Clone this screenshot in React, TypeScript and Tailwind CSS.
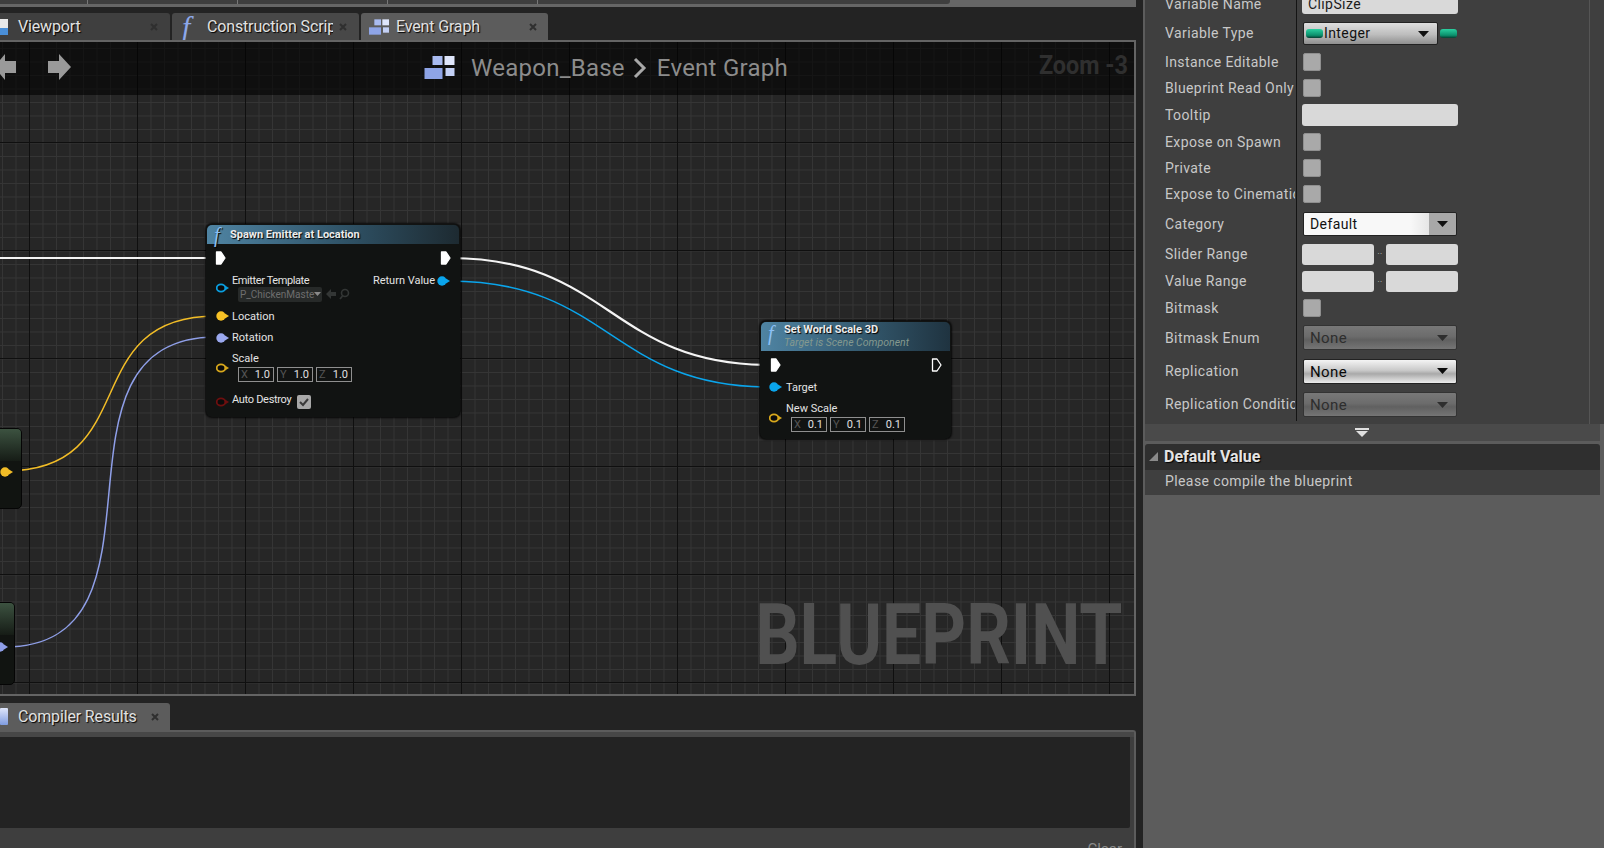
import React from "react";

const Pin = ({ color, hollow = false }: { color: string; hollow?: boolean }) => (
  <svg width="14" height="12" viewBox="0 0 14 12" className="shrink-0">
    <polygon points="9,3.5 13,6 9,8.5" fill={color} />
    <ellipse cx="5" cy="6" rx={hollow ? 4.3 : 4.7} ry={hollow ? 3.6 : 4.7} fill={hollow ? "#0b0b0b" : color} stroke={hollow ? color : "none"} strokeWidth={hollow ? 1.8 : 0} />
  </svg>
);

const Exec = ({ hollow = false }: { hollow?: boolean }) => (
  <svg width="11" height="14" viewBox="0 0 11 14" className="shrink-0">
    <path d="M1.5 1 H6 L10 7 L6 13 H1.5 Z" fill={hollow ? "none" : "#fff"} stroke="#fff" strokeWidth="1.3" strokeLinejoin="round" />
  </svg>
);

const GraphIcon = ({ w, h }: { w: number; h: number }) => (
  <svg width={w} height={h} viewBox="0 0 30 23" className="shrink-0">
    <rect x="8" y="0" width="10" height="9" fill="#a9bbf0" />
    <rect x="20" y="0" width="10" height="9" fill="#dfe6fb" />
    <rect x="0" y="12" width="18" height="11" fill="#8ea4e6" />
    <rect x="21" y="12" width="9" height="8" fill="#c3d0f5" />
  </svg>
);

const FnIcon = ({ cls }: { cls: string }) => (
  <span className={`[font-family:'Liberation_Serif',serif] italic ${cls}`}>f</span>
);

const CloseX = () => (
  <svg width="8" height="8" viewBox="0 0 8 8" className="shrink-0">
    <path d="M1 1 L7 7 M7 1 L1 7" stroke="#2f2f2f" strokeWidth="2" />
  </svg>
);

const Axis = ({ a, v }: { a: string; v: string }) => (
  <div className="flex h-[15px] w-[36px] items-center justify-between border border-[#8f8f8f] pl-[2px] pr-[3px] text-[11px] leading-none">
    <span className="text-[#555555]">{a}</span>
    <span className="text-[#e0e0e0]">{v}</span>
  </div>
);

const Triple = ({ v }: { v: string }) => (
  <div className="ml-[6px] mt-[2px] flex gap-[3px]">
    <Axis a="X" v={v} />
    <Axis a="Y" v={v} />
    <Axis a="Z" v={v} />
  </div>
);

const Caret = ({ cls }: { cls: string }) => (
  <svg width="11" height="6" viewBox="0 0 11 6" className={`shrink-0 ${cls}`}>
    <polygon points="0,0 11,0 5.5,6" fill="currentColor" />
  </svg>
);

const Check = () => <div className="h-[18px] w-[18px] rounded-[2px] border border-[#8f8f8f] bg-[#a9a9a9]" />;

const Field = ({ children, cls }: { children?: React.ReactNode; cls: string }) => (
  <div className={`flex items-center rounded-[3px] bg-[#d9d9d9] pl-[6px] text-[14px] tracking-[0.4px] text-[#1c1c1c] ${cls}`}>{children}</div>
);

const Range = () => (
  <div className="-ml-px flex items-center">
    <Field cls="h-[21px] w-[72px]" />
    <div className="w-[12px] text-center text-[8px] leading-none text-[#cccccc]">··</div>
    <Field cls="h-[21px] w-[72px]" />
  </div>
);

const Combo = ({ on }: { on: boolean }) => (
  <div
    className={
      on
        ? "flex h-[25px] w-[154px] items-center justify-between rounded-[2px] border border-[#222222] bg-[linear-gradient(#f4f4f4,#c9c9c9_45%,#a9a9a9_60%,#ececec)] pl-[6px] pr-[8px] text-[15px] text-[#0a0a0a]"
        : "flex h-[25px] w-[154px] items-center justify-between rounded-[2px] border border-[#333333] bg-[linear-gradient(#787878,#6c6c6c_45%,#606060_60%,#757575)] pl-[6px] pr-[8px] text-[15px] text-[#2e2e2e]"
    }
  >
    <span className="mt-[2px]">None</span>
    <Caret cls={on ? "text-[#0a0a0a]" : "text-[#2e2e2e]"} />
  </div>
);

const rows: { label: string; h: string; lc?: string; c: React.ReactNode }[] = [
  { label: "Variable Name", h: "h-[28px]", c: <Field cls="-ml-px mt-[2px] h-[22px] w-[156px] self-start pt-[2px]">ClipSize</Field> },
  {
    label: "Variable Type",
    h: "h-[31px]",
    c: (
      <div className="flex items-center gap-[2px]">
        <div className="flex h-[23px] w-[135px] items-center rounded-[2px] border border-[#222222] bg-[linear-gradient(#dedede,#bdbdbd_55%,#8f8f8f)] pl-[2px] pr-[8px] text-[14px] tracking-[0.4px] text-[#111111]">
          <div className="h-[9px] w-[17px] rounded-[3px] bg-[linear-gradient(#2ad0a0,#0b8f6c_70%,#063d30)]" />
          <span className="ml-px flex-1">Integer</span>
          <Caret cls="text-[#111111]" />
        </div>
        <div className="h-[9px] w-[17px] rounded-[3px] bg-[linear-gradient(#2ad0a0,#0b8f6c_70%,#063d30)]" />
      </div>
    ),
  },
  { label: "Instance Editable", h: "h-[26px]", c: <Check /> },
  { label: "Blueprint Read Only", h: "h-[26px]", c: <Check /> },
  { label: "Tooltip", h: "h-[28px]", c: <Field cls="-ml-px h-[22px] w-[156px]" /> },
  { label: "Expose on Spawn", h: "h-[26px]", c: <Check /> },
  { label: "Private", h: "h-[26px]", c: <Check /> },
  { label: "Expose to Cinematic", h: "h-[26px]", c: <Check /> },
  {
    label: "Category",
    h: "h-[33px]",
    lc: "pt-[2px]",
    c: (
      <div className="flex h-[24px] w-[154px] items-center overflow-hidden rounded-[2px] border border-[#222222] text-[14px] tracking-[0.4px] text-[#111111]">
        <div className="flex h-full flex-1 items-center bg-[linear-gradient(to_right,#f8f8f8,#f8f8f8_85%,#e6e6e6)] pl-[6px] pt-[2px]">Default</div>
        <div className="flex h-full w-[27px] items-center justify-center bg-[#a8a8a8]"><Caret cls="text-[#111111]" /></div>
      </div>
    ),
  },
  { label: "Slider Range", h: "h-[28px]", c: <Range /> },
  { label: "Value Range", h: "h-[27px]", c: <Range /> },
  { label: "Bitmask", h: "h-[26px]", c: <Check /> },
  { label: "Bitmask Enum", h: "h-[33px]", lc: "pt-[2px]", c: <Combo on={false} /> },
  { label: "Replication", h: "h-[34px]", lc: "pt-[1px]", c: <Combo on /> },
  { label: "Replication Condition", h: "h-[33px]", c: <Combo on={false} /> },
];

const Tab = ({ cls, icon, label, textCls }: { cls: string; icon: React.ReactNode; label: string; textCls: string }) => (
  <div className={`flex h-[27px] items-center rounded-t-[3px] ${cls}`}>
    {icon}
    <span className={`whitespace-nowrap text-[16px] leading-none tracking-[-0.15px] text-[#e2e2e2] [text-shadow:1px_1px_1px_#000] ${textCls}`}>{label}</span>
    <CloseX />
  </div>
);

export default function App() {
  return (
    <div className="flex h-[848px] w-[1604px] overflow-hidden bg-[#232323] [font-family:Roboto,sans-serif]">
      {/* left column */}
      <div className="flex h-full w-[1136px] shrink-0 flex-col">
        <div className="flex h-[7px] shrink-0 flex-col bg-[#666666]">
          <div className="flex h-[4px] w-[950px] justify-between rounded-br-[3px] bg-[#3e3e3e] pl-[87px] pr-[412px]">
            <div className="w-px bg-[#777777]" />
            <div className="w-px bg-[#777777]" />
            <div className="w-px bg-[#777777]" />
            <div className="w-px bg-[#777777]" />
          </div>
        </div>
        {/* tabs */}
        <div className="mt-[6px] flex h-[27px] shrink-0 gap-[2px]">
          <Tab
            cls="ml-[-8px] w-[178px] bg-[#3f3f3f] pl-[8px]"
            textCls="ml-[10px] w-[132px]"
            label="Viewport"
            icon={
              <div className="flex h-[16px] w-[8px] shrink-0 flex-col">
                <div className="h-[9px] bg-[#e8e8e8]" />
                <div className="h-[7px] bg-[#4a8fd8]" />
              </div>
            }
          />
          <Tab
            cls="w-[187px] bg-[#484848] pl-[10px]"
            textCls="ml-[15px] w-[126px] mr-[6px] overflow-hidden"
            label="Construction Script"
            icon={<FnIcon cls="w-[10px] text-[30px] leading-none text-[#8ea8ea]" />}
          />
          <Tab
            cls="w-[187px] bg-[#5c5c5c] pl-[8px]"
            textCls="ml-[7px] w-[133px]"
            label="Event Graph"
            icon={<GraphIcon w={20} h={16} />}
          />
        </div>

        {/* graph */}
        <div className="relative h-[656px] w-full shrink-0 overflow-hidden border-y-2 border-r-2 border-[#646464] bg-[#262626] bg-[linear-gradient(to_right,#0f0f0f_1px,transparent_1px),linear-gradient(to_bottom,#0f0f0f_1px,transparent_1px),linear-gradient(to_right,#353535_1px,transparent_1px),linear-gradient(to_bottom,#353535_1px,transparent_1px)] bg-[size:108px_108px,108px_108px,13.5px_13.5px,13.5px_13.5px] bg-[position:29px_0,0_100px,2px_0,0_6px]">
          {/* title band */}
          <div className="absolute left-0 right-0 top-0 h-[53px] bg-[#000000]/60">
            <svg width="24" height="28" viewBox="0 0 24 28" className="absolute left-[-6px] top-[11px]">
              <polygon points="22,8 22,20 11,20 11,27 0,14 11,1 11,8" fill="#9a9a9a" />
            </svg>
            <svg width="24" height="28" viewBox="0 0 24 28" className="absolute left-[48px] top-[11px]">
              <polygon points="0,8 11,8 11,1 23,14 11,27 11,20 0,20" fill="#9a9a9a" />
            </svg>
            <div className="absolute left-[424px] top-[13px] flex h-[25px] items-center text-[24px] leading-none tracking-[0.25px] text-[#8c8c8c]">
              <GraphIcon w={31} h={23} />
              <span className="ml-[16px]">Weapon_Base</span>
              <svg width="14" height="22" viewBox="0 0 14 22" className="ml-[8px]">
                <path d="M2 2 L11 11 L2 20" fill="none" stroke="#a8a8a8" strokeWidth="3" />
              </svg>
              <span className="ml-[10px]">Event Graph</span>
            </div>
            <div className="absolute right-[6px] top-[8px] origin-right scale-x-[0.9] text-[26px] font-bold leading-[30px] text-[#2f2f2f]">Zoom -3</div>
          </div>

          <div className="absolute bottom-[16px] right-[12px] origin-right scale-x-[0.81] whitespace-nowrap text-[86px] font-bold leading-[86px] text-[#505050]">BLUEPRINT</div>

          {/* wires */}
          <svg className="absolute left-0 top-0" width="1136" height="652" viewBox="0 42 1136 652" fill="none">
            <path d="M0 258 H216" stroke="#f4f4f4" strokeWidth="2.2" />
            <path d="M450 258 C610 258 610 365 770 365" stroke="#f4f4f4" strokeWidth="2.2" />
            <path d="M449 281 C610 281 610 387 770 387" stroke="#0aa5ec" strokeWidth="1.5" />
            <path d="M5 471 C145 471 75 316 216 316" stroke="#f2bd27" strokeWidth="1.5" />
            <path d="M5 647 C185 647 32 337 216 337" stroke="#8f9fe8" strokeWidth="1.5" />
          </svg>

          {/* cut-off nodes on the left edge */}
          <div className="absolute left-[-40px] top-[386px] flex h-[81px] w-[62px] flex-col overflow-hidden rounded-[5px] border border-[#050505] bg-[#111411]">
            <div className="h-[32px] bg-[linear-gradient(to_bottom,#3c5240,#161c16)]" />
            <div className="absolute right-[7px] top-[37px]"><Pin color="#f2bd27" /></div>
          </div>
          <div className="absolute left-[-40px] top-[560px] flex h-[83px] w-[55px] flex-col overflow-hidden rounded-[5px] border border-[#050505] bg-[#111411]">
            <div className="h-[32px] bg-[linear-gradient(to_bottom,#3c5240,#161c16)]" />
            <div className="absolute right-[5px] top-[38px]"><Pin color="#8f9fe8" /></div>
          </div>

          {/* Spawn Emitter at Location */}
          <div className="absolute left-[206px] top-[182px] w-[254px] rounded-[6px] bg-[#111312] pb-[2px] text-[11px] leading-[13px] text-[#e4e4e4] shadow-[0_0_2px_1px_rgba(0,0,0,0.8)]">
            <div className="mx-px mt-px flex h-[19px] items-center rounded-t-[5px] bg-[linear-gradient(to_right,#4f84a3,#2f5266_55%,#1d2a31)] pl-[7px] text-[11px] font-bold text-[#ececec] [text-shadow:1px_1px_1px_#000]">
              <FnIcon cls="w-[16px] text-[20px] font-normal leading-none text-[#8cc0f5]" />
              <span>Spawn Emitter at Location</span>
            </div>
            <div className="flex h-[28px] items-center justify-between pl-[9px] pr-[9px]">
              <Exec />
              <Exec />
            </div>
            <div className="flex h-[32px] items-center justify-between pl-[10px] pr-[9px]">
              <div className="flex items-center gap-[2px]">
                <Pin color="#0a9fe0" hollow />
                <div className="-mt-px">
                  <div className="tracking-[-0.4px]">Emitter Template</div>
                  <div className="flex items-center">
                    <div className="ml-[6px] flex h-[15px] w-[84px] items-center justify-between rounded-[2px] bg-[#272a29] pl-[2px] pr-[3px] text-[10px] text-[#6e6e6e]">
                      <span>P_ChickenMaste</span>
                      <Caret cls="w-[7px] text-[#8a8a8a]" />
                    </div>
                    <svg width="26" height="12" viewBox="0 0 26 12" className="ml-[4px]">
                      <path d="M0 6 L5 1 V4 H10 V8 H5 V11 Z" fill="#333635" />
                      <circle cx="19" cy="5" r="3.5" fill="none" stroke="#333635" strokeWidth="1.6" />
                      <path d="M16.5 8 L14 11" stroke="#333635" strokeWidth="1.8" />
                    </svg>
                  </div>
                </div>
              </div>
              <div className="mb-[15px] flex items-center gap-[2px]">
                <span>Return Value</span>
                <Pin color="#0aa5ec" />
              </div>
            </div>
            <div className="flex h-[24px] items-center gap-[2px] pl-[10px]">
              <Pin color="#f8c225" />
              <span>Location</span>
            </div>
            <div className="flex h-[19px] items-center gap-[2px] pl-[10px]">
              <Pin color="#9aa8ee" />
              <span>Rotation</span>
            </div>
            <div className="flex h-[42px] items-center gap-[2px] pl-[10px]">
              <Pin color="#d8a81c" hollow />
              <div className="mb-[2px]">
                <div>Scale</div>
                <Triple v="1.0" />
              </div>
            </div>
            <div className="flex h-[26px] items-center gap-[2px] pl-[10px]">
              <Pin color="#6e0f0f" hollow />
              <span className="mb-[6px] w-[63px] whitespace-nowrap tracking-[-0.3px]">Auto Destroy</span>
              <div className="flex h-[14px] w-[14px] items-center justify-center rounded-[2px] bg-[#a8a8a8]">
                <svg width="10" height="10" viewBox="0 0 10 10">
                  <path d="M1 5 L4 8 L9 2" fill="none" stroke="#3a3a3a" strokeWidth="2" />
                </svg>
              </div>
            </div>
          </div>

          {/* Set World Scale 3D */}
          <div className="absolute left-[760px] top-[279px] w-[191px] rounded-[6px] bg-[#111312] pb-[1px] text-[11px] leading-[13px] text-[#e4e4e4] shadow-[0_0_2px_1px_rgba(0,0,0,0.8)]">
            <div className="mx-px mt-px flex h-[29px] rounded-t-[5px] bg-[linear-gradient(to_right,#4f84a3,#33586d_55%,#1f3340)] pl-[7px] pt-[1px]">
              <FnIcon cls="w-[16px] text-[20px] leading-none text-[#8cc0f5]" />
              <div>
                <div className="font-bold text-[#ececec] [text-shadow:1px_1px_1px_#000]">Set World Scale 3D</div>
                <div className="text-[10.5px] italic text-[#84998f]">Target is Scene Component</div>
              </div>
            </div>
            <div className="flex h-[28px] items-center justify-between pl-[10px] pr-[9px]">
              <Exec />
              <Exec hollow />
            </div>
            <div className="flex h-[16px] items-center gap-[3px] pl-[9px]">
              <Pin color="#0aa5ec" />
              <span>Target</span>
            </div>
            <div className="flex h-[43px] items-center gap-[3px] pl-[9px]">
              <div className="mt-[3px]"><Pin color="#d8a81c" hollow /></div>
              <div>
                <div>New Scale</div>
                <div className="-ml-px"><Triple v="0.1" /></div>
              </div>
            </div>
          </div>
        </div>

        {/* compiler results */}
        <div className="mt-[7px] flex h-[27px] shrink-0">
          <div className="ml-[-8px] flex w-[178px] items-center rounded-t-[3px] bg-[#5c5c5c] pl-[8px]">
            <div className="h-[17px] w-[8px] shrink-0 rounded-[1px] bg-[linear-gradient(#dfe6fb,#7f9ce0)]" />
            <span className="ml-[10px] w-[133px] whitespace-nowrap text-[16px] leading-none tracking-[-0.15px] text-[#e2e2e2] [text-shadow:1px_1px_1px_#000]">Compiler Results</span>
            <CloseX />
          </div>
        </div>
        <div className="flex min-h-0 flex-1 flex-col rounded-tr-[3px] border-t-2 border-r-2 border-[#5c5c5c] bg-[#3e3e3e]">
          <div className="h-[5px] shrink-0 bg-[#474747]" />
          <div className="mr-[4px] h-[91px] shrink-0 rounded-br-[2px] bg-[#232323]" />
          <div className="mr-[12px] mt-[13px] text-right text-[15px] leading-[16px] text-[#8a8a8a]">Clear</div>
        </div>
      </div>

      {/* right column */}
      <div className="ml-[7px] flex h-full min-w-0 flex-1 flex-col bg-[#5c5c5c] pl-[2px]">
        <div className="relative h-[424px] shrink-0 overflow-hidden bg-[#3f3f3f] text-[14px] tracking-[0.4px] text-[#c8c8c8]">
          <div className="absolute bottom-0 right-[14px] top-0 w-px bg-[#555555]" />
          <div className="mt-[-10px] flex h-[431px] flex-col">
            {rows.map((r) => (
              <div key={r.label} className={`flex shrink-0 items-center ${r.h}`}>
                <div className={`h-full w-[152px] shrink-0 overflow-hidden whitespace-nowrap border-r border-[#141414] pl-[20px] pr-[2px] ${r.lc ?? ""}`}>
                  <div className="flex h-full w-[130px] items-center overflow-hidden">{r.label}</div>
                </div>
                <div className="flex h-full items-center pl-[6px]">{r.c}</div>
              </div>
            ))}
          </div>
        </div>
        <div className="flex h-[17px] w-[455px] shrink-0 items-center justify-center bg-[#4a4a4a] pr-[21px]">
          <svg width="14" height="9" viewBox="0 0 14 9">
            <rect x="0" y="0" width="14" height="2" fill="#e0e0e0" />
            <polygon points="1,3 13,3 7,9" fill="#e0e0e0" />
          </svg>
        </div>
        <div className="mt-[3px] w-[455px] shrink-0">
          <div className="flex h-[26px] items-center rounded-t-[3px] bg-[#2f2f2f] pl-[4px]">
            <svg width="9" height="9" viewBox="0 0 9 9" className="mb-[2px]">
              <polygon points="9,0 9,9 0,9" fill="#8a8a8a" />
            </svg>
            <span className="ml-[6px] text-[16px] font-bold leading-none text-[#e4e4e4] [text-shadow:1px_1px_1px_#000]">Default Value</span>
          </div>
          <div className="flex h-[25px] items-center bg-[#3f3f3f] pb-[3px] pl-[20px] text-[14px] tracking-[0.4px] text-[#c8c8c8]">Please compile the blueprint</div>
        </div>
      </div>
    </div>
  );
}
